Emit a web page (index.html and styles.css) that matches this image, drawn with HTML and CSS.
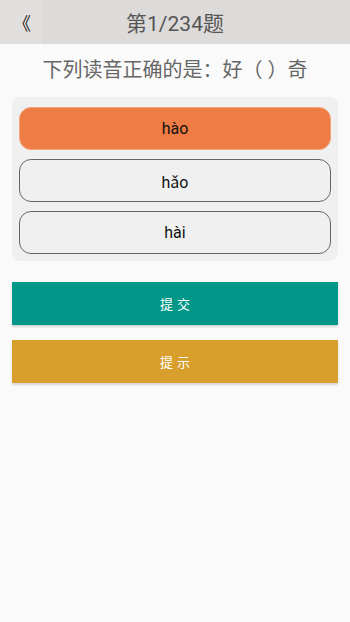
FILE: index.html
```html
<!DOCTYPE html>
<html lang="zh">
<head>
    <meta charset="UTF-8">
    <meta name="viewport" content="width=device-width, initial-scale=1.0">
    <title>答题</title>
    <link rel="stylesheet" href="styles.css">
</head>
<body>
    <div class="header">
        <button class="back">《</button>
        <h1 class="title">第1/234题</h1>
    </div>

    <p class="question">下列读音正确的是：好（ ）奇</p>

    <div class="options">
        <div class="option selected">hào</div>
        <div class="option">hǎo</div>
        <div class="option">hài</div>
    </div>

    <button class="btn btn-submit">提交</button>
    <button class="btn btn-hint">提示</button>
</body>
</html>
```

FILE: styles.css
```css
body {
    font-family: Roboto, "Noto Sans CJK SC", sans-serif;
    margin: 0;
    background-color: #fafafa;
    height: 622px;
}

.header {
    display: flex;
    align-items: center;
    height: 44px;
    background-color: #dcdbd9;
}

.back {
    width: 44px;
    height: 44px;
    border: none;
    border-right: 1px solid #d6d5d3;
    background-color: #e0dfdd;
    color: #222;
    font-family: "Noto Sans CJK SC", sans-serif;
    font-size: 18px;
    padding: 0;
    text-indent: 1px;
}

.title {
    flex: 1;
    margin: 0 44px 0 0;
    text-align: center;
    font-size: 21px;
    font-weight: normal;
    color: #555;
}

.question {
    margin: 13px 0 0;
    text-align: center;
    font-size: 20px;
    color: #666;
    line-height: 26px;
}

.options {
    margin: 14px 12px 0;
    padding: 10px 7px 7px;
    background-color: #f0f0f0;
    border-radius: 8px;
    display: flex;
    flex-direction: column;
    gap: 9px;
}

.option {
    height: 41px;
    border: 1px solid #666;
    border-radius: 12px;
    display: flex;
    justify-content: center;
    align-items: center;
    font-size: 16px;
    color: #111;
}

.option.selected {
    background-color: #ef7b45;
    border-color: #f3a57c;
}

.btn {
    display: block;
    width: 326px;
    height: 43px;
    margin: 21px 12px 0;
    padding: 0 0 0 4px;
    border: none;
    color: #fff;
    font-family: "Noto Sans CJK SC", sans-serif;
    font-size: 13px;
    letter-spacing: 4px;
    box-shadow: 0 2px 2px rgba(0, 0, 0, 0.15);
}

.btn-submit {
    background-color: #009688;
}

.btn-hint {
    margin-top: 15px;
    background-color: #d99f2c;
}
```
